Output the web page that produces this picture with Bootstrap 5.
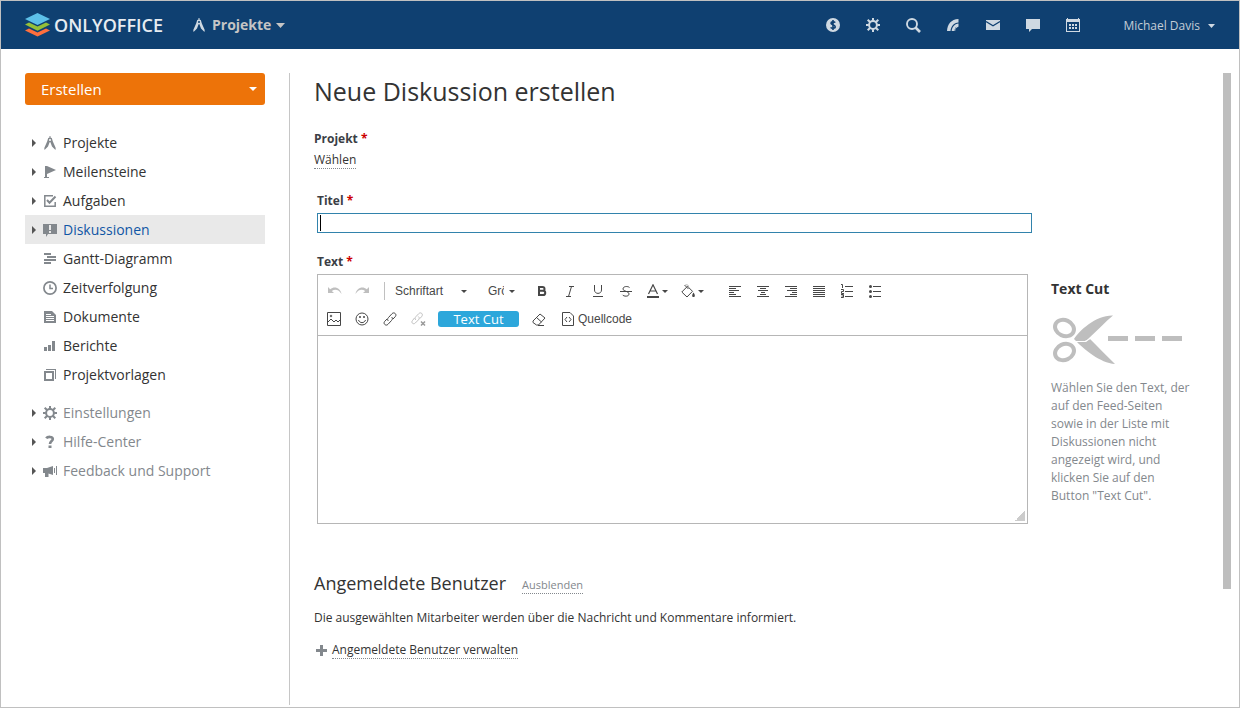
<!DOCTYPE html>
<html lang="de">
<head>
<meta charset="utf-8">
<meta name="viewport" content="width=device-width, initial-scale=1">
<title>Neue Diskussion erstellen</title>
<link href="https://cdn.jsdelivr.net/npm/bootstrap@5.3.0/dist/css/bootstrap.min.css" rel="stylesheet">
<style>
body{font-family:"Open Sans",sans-serif;font-size:12px;line-height:18px;color:#333}
svg{display:block;flex:none}
a{color:inherit;text-decoration:none}
.page-frame{border:1px solid #c0c0c0}
.topbar{background:#0f4071;height:48px;padding:0 24px;color:#cfd9e2}
.brand-name{font-size:18px;font-weight:600;line-height:24px;color:#e7ecf1;margin-left:4px}
.module-btn{font-size:14px;font-weight:700;line-height:20px;color:#c5c5c5;margin-left:30px;gap:7px}
.module-btn .caret-down{margin-left:-2px}
.top-icon{width:40px;height:40px}
.user-btn{font-size:12px;color:#c3cdd6;margin-left:30px;padding:2px 0 0}
.workarea{padding:24px 8px 2px 24px}
.side{width:265px;padding-right:24px;border-right:1px solid #c6c6c6;flex:none}
.create-btn{background:#ed7309;color:#fff;height:32px;font-size:15px;line-height:20px;padding:0 8px 0 16px;border-radius:3px;margin-bottom:23px}
.side-link{height:29px;font-size:14px;line-height:20px;padding:0 7px;color:#333}
.side-link .tri{width:4px;height:8px;margin-right:7px;fill:#555}
.side-link .ico{width:14px;height:14px;margin-right:6px;fill:#83888d;color:#83888d}
.side-link.current{background:#e9e9e9;color:#1056a5}
.side-link.soft{color:#83888d}
.side-group{margin-top:9px}
.content{padding-left:24px}
h1{font-size:25px;line-height:36px;font-weight:400}
.field-label{font-weight:700;color:#3b3e45;display:block}
.project-field{padding-top:21px}
.choose-btn{font-size:12px;color:#333;margin-top:3px}
.req{color:#c00}
.dotted{border-bottom:1px dotted #83888d;line-height:17px}
.rich{padding-left:3px;margin-top:23px}
.rich .field-label{margin-bottom:3px}
.rich .text-label{margin-top:20px}
.title-box{height:20px;min-height:0;border:1px solid #3283ac;border-radius:0;padding:0 4px;font-size:12px;background:linear-gradient(#000,#000) 2px 1px/1px 16px no-repeat #fff}
.title-box:focus{border-color:#3283ac;box-shadow:none}
.editor{border:1px solid #b6b6b6;margin-right:4px}
.tools{border-bottom:1px solid #b6b6b6;padding:2px 2px;color:#474747;font-family:"Liberation Sans",sans-serif}
.tb{width:28px;height:28px;color:#474747}
.tb.pick{width:35px;gap:3px}
.tb.after-gap{margin-left:11px}
.tb:disabled{color:#bfbfbf;border:0;opacity:1}
.tool-sep{width:1px;height:18px;background:#c0c0c0;margin:0 8px}
.tool-select{appearance:none;border:0;border-radius:0;color:#474747;font-family:inherit;font-size:12px;line-height:18px;height:20px;width:78px;padding:0 16px 0 2px;margin-right:17px;background:url("data:image/svg+xml,%3Csvg xmlns='http://www.w3.org/2000/svg' width='6' height='3'%3E%3Cpath fill='%23474747' d='M0 0h6L3 3z'/%3E%3C/svg%3E") no-repeat right 4px center}
.tool-select.narrow{width:31px;padding:0 15px 0 0;margin-right:9px;overflow:hidden;text-overflow:clip}
.cut-btn{width:81px;height:16px;background:#2da7db;color:#fff;border-radius:3px;font-family:"Open Sans",sans-serif;font-size:13px;line-height:16px;margin:0 6px}
.source-btn{font-size:12px;color:#474747;gap:4px;margin-left:9px}
.edit-area{display:block;height:187px;border:0;resize:none;outline:0;border-radius:0}
.grip{right:2px;bottom:2px;width:10px;height:10px;background:linear-gradient(135deg,transparent 50%,#ccc 50%)}
.hint{width:172px;flex:none;margin-left:19px;color:#83888d;padding-top:170px}
.hint h2{font-size:14px;line-height:20px;font-weight:700;color:#333}
.hint p{max-width:144px}
.scissors{margin:16px 0 14px 1px}
.people{margin-top:46px}
.section-title{font-size:18px;line-height:26px;font-weight:400}
.hide-btn{font-size:11px;line-height:15px;color:#83888d;border-radius:0}
.people-note{margin-top:13px}
.manage{margin-top:14px;gap:5px;padding-left:2px}
.scroll-thumb{width:8px;height:516px;background:#bebebe;flex:none}
</style>
</head>
<body>
<div class="page-frame min-vh-100 d-flex flex-column bg-white">
<header class="topbar d-flex align-items-center">
  <a href="#" class="d-flex align-items-center">
    <svg width="25" height="24" viewBox="0 0 25 24"><path fill="#ff6f3d" d="M0 17.500l4-2 8.500 4 8.500-4 4 2-12.500 6z"/><path fill="#95c038" d="M0 11.500l4-2 8.500 4 8.500-4 4 2-12.500 6.200z"/><path fill="#5dc0e8" d="M12.500 0L25 6l-12.500 6L0 6z"/></svg>
    <span class="brand-name">ONLYOFFICE</span>
  </a>
  <button type="button" class="module-btn btn p-0 border-0 d-flex align-items-center">
    <svg width="12" height="14" viewBox="0 0 12 14" fill="none" stroke="#cfd9e2"><path fill="#cfd9e2" stroke="none" d="M5.500 0h1v2h-1zM3.800 4L5.500 6.500 4 10.500.500 14 .300 12zM8.200 4L6.500 6.500 8 10.500l3.500 3.500.200-2z"/><circle cx="6" cy="4" r="1.700" stroke-width="1.400"/></svg>
    <span>Projekte</span>
    <svg class="caret-down" width="9" height="5"><path fill="#c5c5c5" d="M0 0h9L4.500 5z"/></svg>
  </button>
  <nav class="d-flex align-items-center ms-auto" aria-label="Werkzeuge">
    <a href="#" class="top-icon d-flex align-items-center justify-content-center" aria-label="Zahlungen"><svg width="14" height="14" viewBox="0 0 14 14"><circle cx="7" cy="7" r="7" fill="#cfd9e2"/><path fill="none" stroke="#0f4071" stroke-width="1.600" d="M9.200 4.600C8.600 3.700 5 3.300 5 5.200c0 1.800 4.200 1.400 4.200 3.500 0 2-3.800 1.800-4.500.6M7 2v10"/></svg></a>
    <a href="#" class="top-icon d-flex align-items-center justify-content-center" aria-label="Einstellungen"><svg width="14" height="14" viewBox="0 0 14 14" fill="none" stroke="#cfd9e2"><circle cx="7" cy="7" r="3.900" stroke-width="2"/><path stroke-width="2" d="M7 0v2.800M7 11.200V14M0 7h2.800M11.200 7H14M1.700 1.700L4 4M10 10l2.300 2.300M12.300 1.700L10 4M4 10l-2.300 2.300"/></svg></a>
    <a href="#" class="top-icon d-flex align-items-center justify-content-center" aria-label="Suche"><svg width="15" height="15" viewBox="0 0 15 15" fill="none" stroke="#cfd9e2"><circle cx="6" cy="6" r="5" stroke-width="1.900"/><path stroke-width="2.600" d="M9.500 9.500l4.500 4.500"/></svg></a>
    <a href="#" class="top-icon d-flex align-items-center justify-content-center" aria-label="Feed"><svg width="12" height="12" viewBox="0 0 12 12" fill="#cfd9e2"><path d="M0 12C.5 5 4 .5 11.500 0v3.500C7 4 4 7 3.500 12z"/><path d="M4.700 12C5 8 7.500 5 11.500 4.500V12H8.200c0-2 .3-3 1.300-4.500C8.200 8.500 7.700 10 7.600 12z"/><path fill="#0f4071" d="M8.200 12c.1-2 1-3.700 3.800-4.500V12z"/></svg></a>
    <a href="#" class="top-icon d-flex align-items-center justify-content-center" aria-label="E-Mail"><svg width="14" height="10" viewBox="0 0 14 10"><path fill="#cfd9e2" d="M0 0h14v10H0z"/><path fill="none" stroke="#0f4071" stroke-width="1.200" d="M0 1.500l7 4.300 7-4.300"/></svg></a>
    <a href="#" class="top-icon d-flex align-items-center justify-content-center" aria-label="Chat"><svg width="14" height="13" viewBox="0 0 14 13"><path fill="#cfd9e2" d="M0 0h14v10H6l-3 3v-3H0z"/></svg></a>
    <a href="#" class="top-icon d-flex align-items-center justify-content-center" aria-label="Kalender"><svg width="14" height="14" viewBox="0 0 14 14" fill="#cfd9e2"><path fill-rule="evenodd" d="M0 1h1V0h1v1h10V0h1v1h1v13H0zM1 4v9h12V4z"/><path d="M3 6h2v2H3zM6 6h2v2H6zM9 6h2v2H9zM3 9h2v2H3zM6 9h2v2H6zM9 9h2v2H9z"/></svg></a>
    <button type="button" class="user-btn btn border-0 d-flex align-items-center">Michael Davis<svg class="ms-2" width="7" height="4"><path fill="#cfd9e2" d="M0 0h7L3.500 4z"/></svg></button>
  </nav>
</header>

<div class="workarea d-flex flex-grow-1">
<aside class="side">
  <button type="button" class="create-btn btn w-100 border-0 d-flex align-items-center justify-content-between">Erstellen<svg width="8" height="4"><path fill="#fff" d="M0 0h8L4 4z"/></svg></button>
  <nav class="d-flex flex-column" aria-label="Module">
    <a href="#" class="side-link d-flex align-items-center"><svg class="tri"><path d="M0 0l4 4-4 4z"/></svg><svg class="ico" viewBox="0 0 14 14"><path d="M6.500 0h1v2h-1zM4.800 4L6.500 6.500 5 10.500 1.500 14l-.200-2zM9.200 4L7.500 6.500 9 10.500l3.500 3.500.200-2z"/><circle cx="7" cy="4" r="1.700" fill="none" stroke="currentColor" stroke-width="1.400"/></svg>Projekte</a>
    <a href="#" class="side-link d-flex align-items-center"><svg class="tri"><path d="M0 0l4 4-4 4z"/></svg><svg class="ico" viewBox="0 0 14 14"><path d="M2 1h2l9 4-9 4v3h2v1H1v-1h1z"/></svg>Meilensteine</a>
    <a href="#" class="side-link d-flex align-items-center"><svg class="tri"><path d="M0 0l4 4-4 4z"/></svg><svg class="ico" viewBox="0 0 14 14"><path fill="none" stroke="currentColor" stroke-width="1.500" d="M10 1.800H1.800v10.400h10.400V8"/><path fill="none" stroke="currentColor" stroke-width="2" d="M4 6l2.500 2.700L12.500 2.500"/></svg>Aufgaben</a>
    <a href="#" class="side-link current d-flex align-items-center" aria-current="page"><svg class="tri"><path d="M0 0l4 4-4 4z"/></svg><svg class="ico" viewBox="0 0 14 14"><path fill-rule="evenodd" d="M0 1h14v10H5l-2 3v-3H0zM6 2v5h2V2zM6 8v2h2V8z"/></svg>Diskussionen</a>
    <a href="#" class="side-link d-flex align-items-center"><svg class="tri"></svg><svg class="ico" viewBox="0 0 14 14"><path d="M1 1h7v2H1zM4 4h9v2H4zM1 7h12v2H1zM1 10h7v2H1z"/></svg>Gantt-Diagramm</a>
    <a href="#" class="side-link d-flex align-items-center"><svg class="tri"></svg><svg class="ico" viewBox="0 0 14 14"><g fill="none" stroke="currentColor"><circle cx="7" cy="7" r="6.100" stroke-width="1.700"/><path stroke-width="1.500" d="M7 3.500v4h3"/></g></svg>Zeitverfolgung</a>
    <a href="#" class="side-link d-flex align-items-center"><svg class="tri"></svg><svg class="ico" viewBox="0 0 14 14"><path fill-rule="evenodd" d="M1 1h8l4 4v8H1zM3 4v1h5V4zM3 6v1h8V6zM3 8v1h8V8zM3 10v1h8v-1z"/></svg>Dokumente</a>
    <a href="#" class="side-link d-flex align-items-center"><svg class="tri"></svg><svg class="ico" viewBox="0 0 14 14"><path d="M1 8h3v4H1zM5 6h3v6H5zM9 2h3v10H9z"/></svg>Berichte</a>
    <a href="#" class="side-link d-flex align-items-center"><svg class="tri"></svg><svg class="ico" viewBox="0 0 14 14"><path fill-rule="evenodd" d="M1 3h10v10H1zM3 5v6h6V5z"/><path d="M3 1h10v10h-1V2H3z"/></svg>Projektvorlagen</a>
    <a href="#" class="side-link soft side-group d-flex align-items-center"><svg class="tri"><path d="M0 0l4 4-4 4z"/></svg><svg class="ico" viewBox="0 0 14 14"><g fill="none" stroke="currentColor"><circle cx="7" cy="7" r="3.900" stroke-width="2"/><path stroke-width="2" d="M7 0v2.800M7 11.200V14M0 7h2.800M11.200 7H14M1.700 1.700L4 4M10 10l2.300 2.300M12.300 1.700L10 4M4 10l-2.300 2.300"/></g></svg>Einstellungen</a>
    <a href="#" class="side-link soft d-flex align-items-center"><svg class="tri"><path d="M0 0l4 4-4 4z"/></svg><svg class="ico" viewBox="0 0 14 14"><path fill="none" stroke="currentColor" stroke-width="2.600" d="M3.200 3.300C4.500 1.500 9.800 1.200 9.800 4 9.800 6 7 6 7 9"/><path d="M5.500 10.500h3V13h-3z"/></svg>Hilfe-Center</a>
    <a href="#" class="side-link soft d-flex align-items-center"><svg class="tri"><path d="M0 0l4 4-4 4z"/></svg><svg class="ico" viewBox="0 0 14 14"><path d="M0 4h4l6-2v9L5.500 9.500V13H2V9H0z"/><path fill="none" stroke="currentColor" d="M11.500 4v5M13.500 2v9"/></svg>Feedback und Support</a>
  </nav>
</aside>

<main class="content flex-grow-1 d-flex">
<div class="flex-grow-1">
  <h1 class="mb-0">Neue Diskussion erstellen</h1>
  <div class="d-flex">
    <form class="flex-grow-1">
      <div class="project-field">
        <label class="field-label" for="projekt">Projekt <span class="req">*</span></label>
        <button id="projekt" type="button" class="choose-btn btn p-0 border-0 rounded-0"><span class="d-block dotted">Wählen</span></button>
      </div>
      <div class="rich">
      <label class="field-label" for="titel">Titel <span class="req">*</span></label>
      <input id="titel" type="text" class="form-control title-box">
      <label class="field-label text-label" for="text">Text <span class="req">*</span></label>
      <div class="editor position-relative">
        <div class="tools">
          <div class="d-flex align-items-center">
            <button type="button" class="tb btn p-0 border-0 d-flex align-items-center justify-content-center" disabled aria-label="Rückgängig"><svg width="15" height="10" viewBox="0 0 15 10"><path fill="currentColor" d="M1 1v6h6L4.800 5C8 2.500 12 3.500 14.500 8 13.500 2.500 8-.5 3.200 3.200z"/></svg></button>
            <button type="button" class="tb btn p-0 border-0 d-flex align-items-center justify-content-center" disabled aria-label="Wiederholen"><svg width="15" height="10" viewBox="0 0 15 10"><path fill="currentColor" d="M14 1v6H8l2.200-2C7 2.500 3 3.500.500 8 1.500 2.500 7-.5 11.800 3.200z"/></svg></button>
            <span class="tool-sep"></span>
            <select class="tool-select" aria-label="Schriftart"><option>Schriftart</option></select>
            <select class="tool-select narrow" aria-label="Größe"><option>Größe</option></select>
            <button type="button" class="tb btn p-0 border-0 d-flex align-items-center justify-content-center" aria-label="Fett"><svg width="10" height="10" viewBox="0 0 10 10" fill="none" stroke="currentColor" stroke-width="2"><path d="M2 1h3.500c2.700 0 2.700 3.800 0 3.800H2h4c3 0 3 4.200 0 4.200H2zM2 0v10"/></svg></button>
            <button type="button" class="tb btn p-0 border-0 d-flex align-items-center justify-content-center" aria-label="Kursiv"><svg width="10" height="11" viewBox="0 0 10 11" fill="none" stroke="currentColor"><path d="M4 .5h5M1 10.500h5M6.500.5l-3 10"/></svg></button>
            <button type="button" class="tb btn p-0 border-0 d-flex align-items-center justify-content-center" aria-label="Unterstrichen"><svg width="10" height="12" viewBox="0 0 10 12" fill="none" stroke="currentColor"><path d="M1.500 0v5c0 4.500 7 4.500 7 0V0M0 11.500h10"/></svg></button>
            <button type="button" class="tb btn p-0 border-0 d-flex align-items-center justify-content-center" aria-label="Durchgestrichen"><svg width="12" height="11" viewBox="0 0 12 11" fill="none" stroke="currentColor"><path d="M9.500 1.500C8 0 3 0 3 3c0 2.500 6 2 6 5 0 3-5.500 2.500-6.500.8M0 5.500h12"/></svg></button>
            <button type="button" class="tb pick btn p-0 border-0 d-flex align-items-center justify-content-center" aria-label="Textfarbe"><svg width="12" height="14" viewBox="0 0 12 14" fill="none" stroke="currentColor"><path stroke-width="1.200" d="M1.500 10L6 .8 10.500 10M3 7h6"/><path stroke-width="2" d="M0 13h12"/></svg><svg width="6" height="3"><path fill="currentColor" d="M0 0h6L3 3z"/></svg></button>
            <button type="button" class="tb pick btn p-0 border-0 d-flex align-items-center justify-content-center" aria-label="Hintergrundfarbe"><svg width="14" height="14" viewBox="0 0 14 14" fill="none" stroke="currentColor"><path d="M.8 8L6.500 2.300l5 5L6 13zM3.500 1l4 4"/><path stroke="#aaa" d="M4 1.500C6 0 8 .5 7.500 5"/><path fill="currentColor" stroke="none" d="M12.500 8.500c2 3 1.500 4.500 0 4.500s-2-1.500 0-4.500z"/></svg><svg width="6" height="3"><path fill="currentColor" d="M0 0h6L3 3z"/></svg></button>
            <button type="button" class="tb after-gap btn p-0 border-0 d-flex align-items-center justify-content-center" aria-label="Linksbündig"><svg width="12" height="11"><path stroke="currentColor" d="M0 .5h12M0 2.500h7M0 4.500h10M0 6.500h5M0 8.500h7M0 10.500h12"/></svg></button>
            <button type="button" class="tb btn p-0 border-0 d-flex align-items-center justify-content-center" aria-label="Zentriert"><svg width="12" height="11"><path stroke="currentColor" d="M0 .5h12M3 2.500h6M1 4.500h10M4 6.500h4M3 8.500h6M0 10.500h12"/></svg></button>
            <button type="button" class="tb btn p-0 border-0 d-flex align-items-center justify-content-center" aria-label="Rechtsbündig"><svg width="12" height="11"><path stroke="currentColor" d="M0 .5h12M5 2.500h7M2 4.500h10M7 6.500h5M5 8.500h7M0 10.500h12"/></svg></button>
            <button type="button" class="tb btn p-0 border-0 d-flex align-items-center justify-content-center" aria-label="Blocksatz"><svg width="12" height="11"><path stroke="currentColor" d="M0 .5h12M0 2.500h12M0 4.500h12M0 6.500h12M0 8.500h12M0 10.500h12"/></svg></button>
            <button type="button" class="tb btn p-0 border-0 d-flex align-items-center justify-content-center" aria-label="Nummerierte Liste"><svg width="12" height="14" fill="none" stroke="currentColor"><path d="M4 2.500h8M4 7.500h8M4 12.500h8M0 .5h1.500V4M0 5.500h2.500v2H.5v2H3M0 10.500h2.500v3H0M.5 12h2"/></svg></button>
            <button type="button" class="tb btn p-0 border-0 d-flex align-items-center justify-content-center" aria-label="Liste"><svg width="12" height="13"><path stroke="currentColor" d="M4 1.500h8M4 6.500h8M4 11.500h8"/><g fill="currentColor"><circle cx="1.500" cy="1.500" r="1.500"/><circle cx="1.500" cy="6.500" r="1.500"/><circle cx="1.500" cy="11.500" r="1.500"/></g></svg></button>
          </div>
          <div class="d-flex align-items-center">
            <button type="button" class="tb btn p-0 border-0 d-flex align-items-center justify-content-center" aria-label="Bild"><svg width="14" height="14" viewBox="0 0 14 14" fill="none" stroke="currentColor"><path d="M.5.500h13v13H.500zM1 10l3-3 3 3 2-2 2 2 2-2"/><circle cx="4" cy="4" r=".8"/></svg></button>
            <button type="button" class="tb btn p-0 border-0 d-flex align-items-center justify-content-center" aria-label="Smiley"><svg width="14" height="14" viewBox="0 0 14 14" fill="none" stroke="currentColor"><circle cx="7" cy="7" r="6"/><path d="M3.500 8c1 3.500 6 3.500 7 0"/><path stroke-width="1.700" d="M4 5h2M8 5h2"/></svg></button>
            <button type="button" class="tb btn p-0 border-0 d-flex align-items-center justify-content-center" aria-label="Link"><svg width="14" height="14" viewBox="0 0 14 14" fill="none" stroke="currentColor"><path d="M5.500 9C4 8 4.500 6.500 5.500 5.500l3.500-3.800c2-2.200 5.300.6 3.300 2.900L10 7M8.500 5c1.500 1 1 2.500 0 3.500L5 12.300c-2 2.200-5.300-.6-3.300-2.900L4 7"/></svg></button>
            <button type="button" class="tb btn p-0 border-0 d-flex align-items-center justify-content-center" disabled aria-label="Link entfernen"><svg width="15" height="14" viewBox="0 0 15 14" fill="none" stroke="currentColor"><path d="M5 8C3.500 7 4 5.500 5 4.500l2.800-2.900c2-2 4.800.6 3 2.700L9 6.500M7.300 4.500c1.500 1 1 2.500 0 3.500L4.300 11C2.300 13-.3 10.500 1.500 8.500L3.500 6"/><path stroke="#999" stroke-width="1.500" d="M10 9.500l4 4M14 9.500l-4 4"/></svg></button>
            <button type="button" class="cut-btn btn p-0 border-0">Text Cut</button>
            <button type="button" class="tb btn p-0 border-0 d-flex align-items-center justify-content-center" aria-label="Formatierung entfernen"><svg width="14" height="13" viewBox="0 0 14 13" fill="none" stroke="currentColor"><path d="M1 8l7-7 5 4-6.500 7H4.500L1 9.500zM4.500 4.500l5 4.500M6 12.500h6"/></svg></button>
            <button type="button" class="source-btn btn p-0 border-0 d-flex align-items-center"><svg width="12" height="14" viewBox="0 0 12 14" fill="none" stroke="currentColor"><path d="M.5.500h7.500l3.500 3.500v9.500H.500zM5 5L3 7.500 5 10M7 5l2 2.500L7 10"/></svg>Quellcode</button>
          </div>
        </div>
        <textarea id="text" class="edit-area w-100"></textarea>
        <span class="grip position-absolute"></span>
      </div>
      </div>
    </form>
    <aside class="hint">
      <h2 class="mb-0">Text Cut</h2>
      <svg class="scissors" width="132" height="50" viewBox="0 0 132 50" fill="#bebebe"><g fill="none" stroke="#bebebe" stroke-width="4"><ellipse cx="12.500" cy="13" rx="9.800" ry="7.800" transform="rotate(25 12.500 13)"/><ellipse cx="12.500" cy="37" rx="9.800" ry="7.800" transform="rotate(-25 12.500 37)"/></g><path d="M22 24C27 16 44 0 61 .500 53 7 45 16 36 24c-1 2-3 2-5 2l-7 0z"/><path d="M25 27h9l4-3c8 8 16 16 25 25C48 48 32 34 25 27z"/><path stroke="#fff" fill="none" d="M24 26.500h9l5-3"/><path d="M56 21h20v5H56zM83 21h20v5H83zM110 21h20v5h-20z"/></svg>
      <p class="mb-0">Wählen Sie den Text, der auf den Feed-Seiten sowie in der Liste mit Diskussionen nicht angezeigt wird, und klicken Sie auf den Button "Text Cut".</p>
    </aside>
  </div>
  <section class="people">
    <div class="d-flex align-items-center">
      <h2 class="section-title mb-0">Angemeldete Benutzer</h2>
      <button type="button" class="hide-btn btn p-0 border-0 ms-3 mt-1"><span class="dotted d-block">Ausblenden</span></button>
    </div>
    <p class="people-note mb-0">Die ausgewählten Mitarbeiter werden über die Nachricht und Kommentare informiert.</p>
    <a href="#" class="manage d-inline-flex align-items-center"><svg width="11" height="11"><path fill="#83888d" d="M4 0h3v4h4v3H7v4H4V7H0V4h4z"/></svg><span class="dotted">Angemeldete Benutzer verwalten</span></a>
  </section>
</div>
<div class="scroll-thumb"></div>
</main>
</div>
</div>
<script src="https://cdn.jsdelivr.net/npm/bootstrap@5.3.0/dist/js/bootstrap.bundle.min.js"></script>
</body>
</html>
